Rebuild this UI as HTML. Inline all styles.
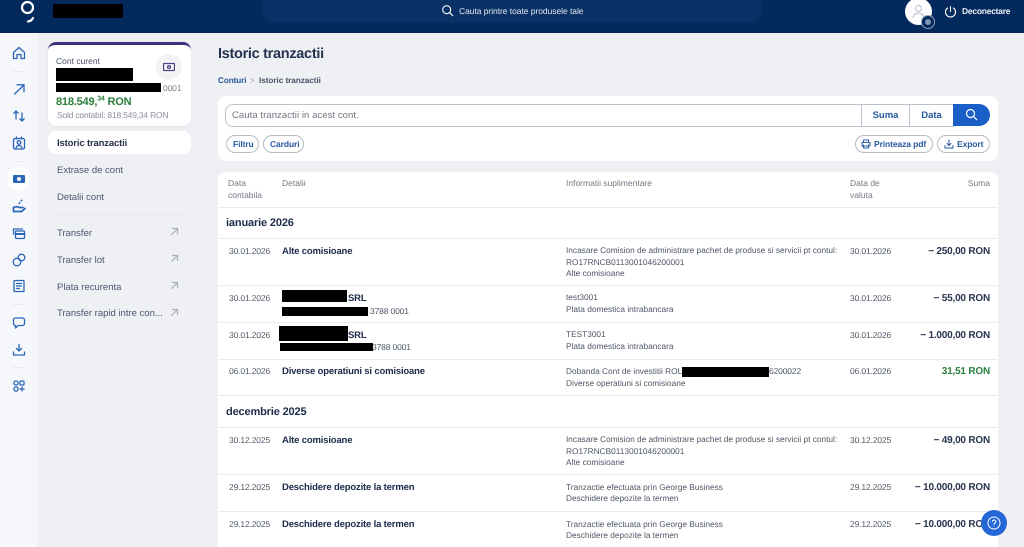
<!DOCTYPE html>
<html><head><meta charset="utf-8"><style>
*{box-sizing:border-box}
html,body{margin:0;padding:0;width:1024px;height:547px;overflow:hidden;background:#eef0f4;font-family:"Liberation Sans",sans-serif;color:#3e4a63;text-rendering:geometricPrecision}
#p{position:absolute;left:0;top:0;width:1024px;height:547px;overflow:hidden}
.a{position:absolute;white-space:nowrap}
.t{position:absolute;white-space:nowrap;font-size:8.5px;line-height:12px;color:#4f5868;letter-spacing:-.15px}
.i{position:absolute;white-space:nowrap;font-size:8.3px;line-height:12px;color:#4f5868;left:566px}
.h{position:absolute;white-space:nowrap;font-size:8.5px;line-height:12px;color:#737a86}
.b{position:absolute;white-space:nowrap;font-size:9.5px;line-height:12px;font-weight:bold;color:#1c2b4a;letter-spacing:-.17px}
.r{position:absolute;white-space:nowrap;right:34px;font-size:10px;line-height:12px;font-weight:bold;color:#28344f;letter-spacing:-.2px}
.k{position:absolute;background:#000}
.hr{position:absolute;left:218px;width:780px;height:1px;background:#e9ebef}
.m{position:absolute;left:57px;font-size:9.5px;line-height:12px;color:#4c5670;white-space:nowrap}
.pill{position:absolute;height:18px;border:1px solid #b4bcc8;border-radius:9px;background:#fff;font-size:8.5px;line-height:16px;font-weight:bold;color:#2a5a9f;white-space:nowrap;letter-spacing:-.1px}
svg{position:absolute;fill:none;stroke:#2a66b8;stroke-width:1.3;stroke-linecap:round;stroke-linejoin:round}
.ar{stroke:#a9aeb8;stroke-width:1.2}
</style></head><body><div id="p">
<!-- sidebar -->
<div class="a" style="left:0;top:33px;width:38px;height:514px;background:#f5f7fb"></div>
<!-- header -->
<div class="a" style="left:0;top:0;width:1024px;height:33px;background:#04295d"></div>
<div class="a" style="left:262px;top:0;width:500px;height:23px;background:#0a3166;border-radius:0 0 10px 10px"></div>
<svg style="left:18px;top:0" width="20" height="24" viewBox="0 0 20 24"><circle cx="9.5" cy="7.5" r="5.5" stroke="#fff" stroke-width="2.2"/><path d="M10 21.5c2.500-.3 4-1.500 5-3.500" stroke="#fff" stroke-width="2.200"/></svg>
<div class="k" style="left:53px;top:4px;width:70px;height:14px"></div>
<svg style="left:441px;top:4px" width="13" height="13" viewBox="0 0 13 13"><circle cx="5.700" cy="5.700" r="4" stroke="#fff" stroke-width="1.100"/><path d="M8.700 8.700l3 3" stroke="#fff" stroke-width="1.100"/></svg>
<div class="a" style="left:459px;top:5px;font-size:8.5px;line-height:12px;color:#dfe6f0;letter-spacing:-.05px">Cauta printre toate produsele tale</div>
<div class="a" style="left:905px;top:-2px;width:27px;height:27px;border-radius:50%;background:#fff"></div>
<svg style="left:911px;top:4px" width="15" height="15" viewBox="0 0 15 15"><circle cx="7.500" cy="4.500" r="3" stroke="#b9bfc9" stroke-width="1.100"/><path d="M2 13.500c.5-3 3-4.500 5.500-4.500s5 1.500 5.500 4.500" stroke="#b9bfc9" stroke-width="1.100"/></svg>
<div class="a" style="left:921px;top:15px;width:14px;height:14px;border-radius:50%;background:#04295d;border:1px solid #8ea2bd"></div>
<div class="a" style="left:925px;top:19px;width:6px;height:6px;border-radius:50%;background:#7f97b5"></div>
<svg style="left:944px;top:5px" width="13" height="13" viewBox="0 0 13 13"><path d="M6.500 1.500v5M3.500 3a5 5 0 1 0 6 0" stroke="#fff" stroke-width="1.100"/></svg>
<div class="a" style="left:962px;top:5px;font-size:8.5px;line-height:12px;font-weight:bold;color:#e8edf4;letter-spacing:-.25px">Deconectare</div>
<!-- sidebar icons -->
<svg style="left:12px;top:46px" width="14" height="14" viewBox="0 0 14 14"><path d="M1.500 6.500L7 1.500l5.500 5v6H9V8.500H5v4H1.500z"/></svg>
<div class="a" style="left:12px;top:71px;width:13px;height:1px;background:#e8ebf0"></div>
<svg style="left:12px;top:82px" width="14" height="14" viewBox="0 0 14 14"><path d="M2.500 12L12 3M5 2.800h7v7"/></svg>
<svg style="left:12px;top:109px" width="14" height="14" viewBox="0 0 14 14"><path d="M4 10V2M1.800 4.200L4 2l2.200 2.200M10 4v8M7.800 9.800L10 12l2.200-2.200"/></svg>
<svg style="left:12px;top:136px" width="14" height="14" viewBox="0 0 14 14"><rect x="1.500" y="2.500" width="11" height="10.500" rx="1.500"/><circle cx="7" cy="6.500" r="1.800"/><path d="M4 12c.4-2 1.500-2.500 3-2.500s2.600.5 3 2.500M4.500 1v2M9.500 1v2"/></svg>
<div class="a" style="left:12px;top:161px;width:13px;height:1px;background:#e8ebf0"></div>
<div class="a" style="left:8px;top:168px;width:21px;height:22px;border-radius:7px;background:#fff"></div>
<div class="a" style="left:13px;top:175px;width:12px;height:8px;background:#2a66b8;border-radius:1px"></div>
<div class="a" style="left:17px;top:177px;width:4px;height:4px;background:#fff;border-radius:50%"></div>
<svg style="left:12px;top:199px" width="14" height="14" viewBox="0 0 14 14"><path d="M1.500 8.500c3-1.500 5-.5 6 0h3.500M1.500 9v3.500h8l3.500-3M9.500 1.500l-.1.100M7.500 4l-.1.100" stroke-width="1.800"/></svg>
<svg style="left:12px;top:226px" width="14" height="14" viewBox="0 0 14 14"><path d="M1.500 8V3h9"/><rect x="3.500" y="5" width="9" height="7.500" rx="1"/><path d="M3.500 8h9" stroke-width="2"/></svg>
<svg style="left:12px;top:253px" width="14" height="14" viewBox="0 0 14 14"><circle cx="5" cy="9" r="3.800"/><circle cx="9.500" cy="4.500" r="3.300"/></svg>
<svg style="left:12px;top:279px" width="14" height="14" viewBox="0 0 14 14"><rect x="2" y="1.500" width="10" height="11" rx=".8"/><path d="M4.500 4.500h5M4.500 7h5M4.500 9.500h3"/></svg>
<div class="a" style="left:12px;top:304px;width:13px;height:1px;background:#e8ebf0"></div>
<svg style="left:12px;top:316px" width="14" height="14" viewBox="0 0 14 14"><path d="M3.500 2h7a2 2 0 0 1 2 2v3.500a2 2 0 0 1-2 2H6L3.500 12v-2.500a2 2 0 0 1-2-2V4a2 2 0 0 1 2-2z"/></svg>
<svg style="left:12px;top:343px" width="14" height="14" viewBox="0 0 14 14"><path d="M7 1.500V8M4.500 5.500L7 8l2.500-2.500M1.500 9v3h11V9"/></svg>
<div class="a" style="left:12px;top:367px;width:13px;height:1px;background:#e8ebf0"></div>
<svg style="left:12px;top:379px" width="14" height="14" viewBox="0 0 14 14"><circle cx="4" cy="4" r="2.100"/><rect x="8" y="2" width="4" height="4" rx=".8"/><circle cx="4" cy="10" r="2.100"/><path d="M10 8v4M8 10h4"/></svg>
<!-- account card -->
<div class="a" style="left:48px;top:42px;width:143px;height:84px;background:#fff;border-radius:8px;border-top:3px solid #3e2f7f;box-shadow:0 1px 3px rgba(40,50,80,.06)"></div>
<div class="a" style="left:56px;top:55px;font-size:8.500px;line-height:12px;color:#4d5668">Cont curent</div>
<div class="k" style="left:56px;top:68px;width:77px;height:13px"></div>
<div class="k" style="left:56px;top:83px;width:105px;height:9px"></div>
<div class="a" style="left:163px;top:83px;font-size:8.500px;line-height:11px;color:#7d8390;letter-spacing:-.15px">0001</div>
<div class="a" style="left:156px;top:54px;width:26px;height:26px;border-radius:50%;background:#f3f3f6"></div>
<svg style="left:163px;top:61px" width="12" height="12" viewBox="0 0 12 12"><rect x=".5" y="2.500" width="11" height="7" rx=".5" stroke="#4b4588"/><circle cx="6" cy="6" r="1.400" stroke="#4b4588"/></svg>
<div class="a" style="left:56px;top:95px;font-size:11px;line-height:15px;font-weight:bold;color:#2a7f3c;letter-spacing:-.2px">818.549,<sup style="font-size:7px;line-height:0">34</sup> RON</div>
<div class="a" style="left:57px;top:109px;font-size:8.500px;line-height:12px;color:#8a909b;letter-spacing:-.2px">Sold contabil: 818.549,34 RON</div>
<!-- side menu -->
<div class="a" style="left:48px;top:131px;width:143px;height:23px;background:#fff;border-radius:8px"></div>
<div class="m" style="top:138px;font-weight:bold;color:#27324c;letter-spacing:-.15px">Istoric tranzactii</div>
<div class="m" style="top:165px">Extrase de cont</div>
<div class="m" style="top:192px">Detalii cont</div>
<div class="a" style="left:52px;top:214px;width:133px;height:1px;background:#e6e8ec"></div>
<div class="m" style="top:228px">Transfer</div>
<div class="m" style="top:255px">Transfer lot</div>
<div class="m" style="top:282px">Plata recurenta</div>
<div class="m" style="top:308px">Transfer rapid intre con...</div>
<svg class="ar" style="left:170px;top:227px" width="9" height="9" viewBox="0 0 9 9"><path d="M1.500 7.500l6-6M2.500 1.500h5v5"/></svg>
<svg class="ar" style="left:170px;top:254px" width="9" height="9" viewBox="0 0 9 9"><path d="M1.500 7.500l6-6M2.500 1.500h5v5"/></svg>
<svg class="ar" style="left:170px;top:281px" width="9" height="9" viewBox="0 0 9 9"><path d="M1.500 7.500l6-6M2.500 1.500h5v5"/></svg>
<svg class="ar" style="left:170px;top:308px" width="9" height="9" viewBox="0 0 9 9"><path d="M1.500 7.500l6-6M2.500 1.500h5v5"/></svg>
<!-- title -->
<div class="a" style="left:218px;top:45px;font-size:14.500px;line-height:18px;font-weight:bold;color:#25324e;letter-spacing:-.3px">Istoric tranzactii</div>
<div class="a" style="left:218px;top:75px;font-size:8.200px;line-height:12px;font-weight:bold;color:#2a5a9f;letter-spacing:-.1px">Conturi</div>
<div class="a" style="left:250px;top:75px;font-size:8px;line-height:12px;color:#9aa0aa">&gt;</div>
<div class="a" style="left:259px;top:75px;font-size:8.200px;line-height:12px;font-weight:bold;color:#4a5468;letter-spacing:-.05px">Istoric tranzactii</div>
<!-- search card -->
<div class="a" style="left:218px;top:96px;width:780px;height:65px;background:#fff;border-radius:8px"></div>
<div class="a" style="left:225px;top:104px;width:637px;height:23px;border:1px solid #bcc3cd;border-radius:8px 0 0 8px;background:#fff"></div>
<div class="a" style="left:232px;top:110px;font-size:9.500px;line-height:12px;color:#70767f;letter-spacing:.07px">Cauta tranzactii in acest cont.</div>
<div class="a" style="left:861px;top:104px;width:49px;height:23px;border:1px solid #bcc3cd;background:#fff;font-size:9.500px;line-height:21px;font-weight:bold;color:#2a5a9f;text-align:center">Suma</div>
<div class="a" style="left:909px;top:104px;width:45px;height:23px;border:1px solid #bcc3cd;background:#fff;font-size:9.500px;line-height:21px;font-weight:bold;color:#2a5a9f;text-align:center">Data</div>
<div class="a" style="left:953px;top:104px;width:37px;height:22px;background:#1a5fc8;border-radius:0 11px 11px 0"></div>
<svg style="left:965px;top:108px" width="13" height="13" viewBox="0 0 13 13"><circle cx="5.500" cy="5.500" r="4" stroke="#fff" stroke-width="1.200"/><path d="M8.500 8.500l3.200 3.200" stroke="#fff" stroke-width="1.200"/></svg>
<div class="pill" style="left:226px;top:135px;width:33px;padding-left:6px">Filtru</div>
<div class="pill" style="left:263px;top:135px;width:41px;padding-left:6px">Carduri</div>
<div class="pill" style="left:855px;top:135px;width:78px;padding-left:18px">Printeaza pdf</div>
<svg style="left:861px;top:139px;stroke:#2a5a9f;stroke-width:1" width="10" height="10" viewBox="0 0 10 10"><path d="M2.500 3V1h5v2M1 3.500h8v3.500H1zM2.500 6v3h5V6"/></svg>
<div class="pill" style="left:937px;top:135px;width:53px;padding-left:19px">Export</div>
<svg style="left:944px;top:139px;stroke:#2a5a9f;stroke-width:1" width="10" height="10" viewBox="0 0 10 10"><path d="M5 1v5M3 4.500L5 6.500l2-2M1 6.500V9h8V6.500"/></svg>
<!-- table -->
<div class="a" style="left:218px;top:172px;width:780px;height:375px;background:#fff;border-radius:8px 8px 0 0"></div>
<div class="h" style="left:228px;top:177px">Data<br>contabila</div>
<div class="h" style="left:282px;top:177px">Detalii</div>
<div class="h" style="left:566px;top:177px">Informatii suplimentare</div>
<div class="h" style="left:850px;top:177px">Data de<br>valuta</div>
<div class="h" style="right:34px;top:177px">Suma</div>
<div class="hr" style="top:207px"></div>
<div class="a" style="left:226px;top:216px;font-size:11px;line-height:15px;font-weight:bold;color:#1c2b4a;letter-spacing:-.15px">ianuarie 2026</div>
<div class="hr" style="top:238px"></div>

<div class="t" style="left:229px;top:245px">30.01.2026</div>
<div class="b" style="left:282px;top:246px">Alte comisioane</div>
<div class="i" style="top:245px;line-height:11.500px">Incasare Comision de administrare pachet de produse si servicii pt contul:<br>RO17RNCB0113001046200001<br>Alte comisioane</div>
<div class="t" style="left:850px;top:245px">30.01.2026</div>
<div class="r" style="top:246px">− 250,00 RON</div>
<div class="hr" style="top:285px"></div>

<div class="t" style="left:229px;top:292px">30.01.2026</div>
<div class="k" style="left:282px;top:290px;width:65px;height:12px"></div>
<div class="b" style="left:348px;top:293px">SRL</div>
<div class="k" style="left:282px;top:307px;width:86px;height:9px"></div>
<div class="t" style="left:370px;top:305px">3788 0001</div>
<div class="i" style="top:291px">test3001</div>
<div class="i" style="top:303px">Plata domestica intrabancara</div>
<div class="t" style="left:850px;top:292px">30.01.2026</div>
<div class="r" style="top:293px">− 55,00 RON</div>
<div class="hr" style="top:322px"></div>

<div class="t" style="left:229px;top:329px">30.01.2026</div>
<div class="k" style="left:279px;top:326px;width:69px;height:15px"></div>
<div class="b" style="left:348px;top:330px">SRL</div>
<div class="t" style="left:372px;top:341px">3788 0001</div>
<div class="k" style="left:280px;top:343px;width:93px;height:8px"></div>
<div class="i" style="top:328px">TEST3001</div>
<div class="i" style="top:340px">Plata domestica intrabancara</div>
<div class="t" style="left:850px;top:329px">30.01.2026</div>
<div class="r" style="top:330px">− 1.000,00 RON</div>
<div class="hr" style="top:359px"></div>

<div class="t" style="left:229px;top:365px">06.01.2026</div>
<div class="b" style="left:282px;top:366px">Diverse operatiuni si comisioane</div>
<div class="i" style="top:365px">Dobanda Cont de investitii ROL</div>
<div class="k" style="left:682px;top:367px;width:87px;height:10px"></div>
<div class="t" style="left:769px;top:365px">6200022</div>
<div class="i" style="top:377px">Diverse operatiuni si comisioane</div>
<div class="t" style="left:850px;top:365px">06.01.2026</div>
<div class="r" style="top:366px;color:#2a7f3c">31,51 RON</div>
<div class="hr" style="top:395px"></div>

<div class="a" style="left:226px;top:405px;font-size:11px;line-height:15px;font-weight:bold;color:#1c2b4a;letter-spacing:-.15px">decembrie 2025</div>
<div class="hr" style="top:427px"></div>

<div class="t" style="left:229px;top:434px">30.12.2025</div>
<div class="b" style="left:282px;top:435px">Alte comisioane</div>
<div class="i" style="top:434px;line-height:11.500px">Incasare Comision de administrare pachet de produse si servicii pt contul:<br>RO17RNCB0113001046200001<br>Alte comisioane</div>
<div class="t" style="left:850px;top:434px">30.12.2025</div>
<div class="r" style="top:435px">− 49,00 RON</div>
<div class="hr" style="top:474px"></div>

<div class="t" style="left:229px;top:481px">29.12.2025</div>
<div class="b" style="left:282px;top:482px">Deschidere depozite la termen</div>
<div class="i" style="top:481px">Tranzactie efectuata prin George Business</div>
<div class="i" style="top:492px">Deschidere depozite la termen</div>
<div class="t" style="left:850px;top:481px">29.12.2025</div>
<div class="r" style="top:482px">− 10.000,00 RON</div>
<div class="hr" style="top:511px"></div>

<div class="t" style="left:229px;top:518px">29.12.2025</div>
<div class="b" style="left:282px;top:519px">Deschidere depozite la termen</div>
<div class="i" style="top:518px">Tranzactie efectuata prin George Business</div>
<div class="i" style="top:529px">Deschidere depozite la termen</div>
<div class="t" style="left:850px;top:518px">29.12.2025</div>
<div class="r" style="top:519px">− 10.000,00 RON</div>
<!-- help -->
<div class="a" style="left:981px;top:510px;width:26px;height:26px;border-radius:50%;background:#2467d6"></div>
<svg style="left:987px;top:516px" width="14" height="14" viewBox="0 0 14 14"><circle cx="7" cy="7" r="6" stroke="#fff" stroke-width="1"/><path d="M5.200 5.500c.2-1 1-1.500 1.900-1.500 1 0 1.800.7 1.800 1.600 0 1.300-1.900 1.400-1.900 2.900M7 10.200v.1" stroke="#fff" stroke-width="1"/></svg>
</div></body></html>
